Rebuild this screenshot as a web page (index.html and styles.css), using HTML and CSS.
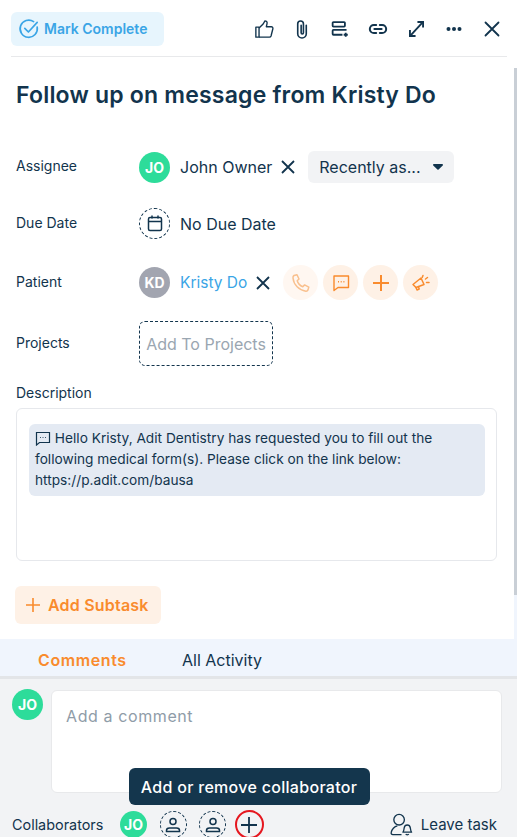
FILE: index.html
```html
<!DOCTYPE html>
<html lang="en">
<head>
    <meta charset="UTF-8">
    <meta name="viewport" content="width=device-width, initial-scale=1.0">
    <title>Task</title>
    <link rel="stylesheet" href="styles.css">
</head>
<body>
    <div class="panel">
        <div class="scroll">
            <div class="scroll-body">
                <!-- Top toolbar -->
                <div class="toolbar">
                    <div class="mark-complete">
                        <svg width="22" height="22" viewBox="0 0 22 22" fill="none" stroke="#3aa5e6" stroke-width="1.7" stroke-linecap="round" stroke-linejoin="round"><path d="M19.2 9.2A8.6 8.6 0 1 1 15.6 3.6"/><path d="M6.8 10.4l3.6 3.6 8.8-9.6"/></svg>
                        <span>Mark Complete</span>
                    </div>
                    <div class="tools">
                        <div class="tool"><svg width="21" height="20" viewBox="0 0 22 22" fill="none" stroke="#12344d" stroke-width="1.5" stroke-linejoin="round"><rect x="1.5" y="9" width="3.5" height="11"/><path d="M5 10l4.500-4.500L11.500 2c1.800 0 2.600 1.500 2.300 3L13 8.500h5.500c1.300 0 2 1 1.700 2.200l-2 8c-.3.900-1 1.300-1.800 1.300H5"/></svg></div>
                        <div class="tool"><svg width="12" height="19" viewBox="4 1.500 12 20" fill="none" stroke="#12344d" stroke-width="1.7" stroke-linecap="round"><path d="M14.500 7v9a4.500 4.500 0 0 1-9 0V5.500a3 3 0 0 1 6 0V15a1.200 1.200 0 0 1-2.400 0V7"/></svg></div>
                        <div class="tool"><svg width="18" height="18" viewBox="0 0 22 22" fill="none" stroke="#12344d" stroke-width="2.200"><rect x="2" y="2.500" width="15" height="5.500" rx="1"/><path d="M19 12H3a1 1 0 0 0-1 1v4a1 1 0 0 0 1 1h11"/><path d="M18 15.500v5M15.500 18h5"/></svg></div>
                        <div class="tool"><svg width="20" height="20" viewBox="0 0 22 22" fill="none" stroke="#12344d" stroke-width="2.200" stroke-linecap="round"><path d="M9 6.500H6.500a4.500 4.500 0 0 0 0 9H9"/><path d="M13 6.500h2.500a4.500 4.500 0 0 1 0 9H13"/><path d="M7 11h8"/></svg></div>
                        <div class="tool"><svg width="15" height="16" viewBox="2 3 16 17" fill="none" stroke="#12344d" stroke-width="2"><path d="M3.500 18.500l13-14"/><path d="M11 4h6v6"/><path d="M3 12.500v6.500h6"/></svg></div>
                        <div class="tool"><svg width="16" height="6" viewBox="0 0 16 6" fill="#12344d"><circle cx="2.500" cy="3" r="2"/><circle cx="8" cy="3" r="2"/><circle cx="13.500" cy="3" r="2"/></svg></div>
                        <div class="tool"><svg width="16" height="16" viewBox="0 0 16 16" fill="none" stroke="#12344d" stroke-width="1.800" stroke-linecap="round"><path d="M1.500 1.500l13 13M14.500 1.500l-13 13"/></svg></div>
                    </div>
                </div>

                <h1 class="title">Follow up on message from Kristy Do</h1>

                <div class="field assignee">
                    <div class="label">Assignee</div>
                    <div class="value">
                        <div class="avatar green">JO</div>
                        <span class="name">John Owner</span>
                        <svg class="x" width="16" height="16" viewBox="0 0 16 16" fill="none" stroke="#12344d" stroke-width="1.800"><path d="M2 2l12 12M14 2L2 14"/></svg>
                        <div class="select">
                            <span>Recently as...</span>
                            <svg width="10" height="6" viewBox="0 0 12 7" fill="#12344d"><path d="M1 0h10a1 1 0 0 1 .7 1.700L6.700 6.400a1 1 0 0 1-1.400 0L.3 1.700A1 1 0 0 1 1 0z"/></svg>
                        </div>
                    </div>
                </div>

                <div class="field due">
                    <div class="label">Due Date</div>
                    <div class="value">
                        <div class="avatar dashed">
                            <svg width="16" height="17" viewBox="0 0 16 17" fill="none" stroke="#12344d" stroke-width="1.500"><rect x="1.500" y="2.500" width="13" height="13" rx="1.500"/><path d="M1.500 6.500h13M5 .5v3M11 .5v3"/></svg>
                        </div>
                        <span class="name">No Due Date</span>
                    </div>
                </div>

                <div class="field patient">
                    <div class="label">Patient</div>
                    <div class="value">
                        <div class="avatar gray">KD</div>
                        <span class="name link">Kristy Do</span>
                        <svg class="x" width="16" height="16" viewBox="0 0 16 16" fill="none" stroke="#12344d" stroke-width="1.800"><path d="M2 2l12 12M14 2L2 14"/></svg>
                        <div class="actions">
                            <div class="action faded">
                                <svg width="20" height="20" viewBox="0 0 20 20" fill="none" stroke="#f9c08e" stroke-width="1.500" stroke-linejoin="round"><path d="M3 2.500l3-.8 2 4.300-1.800 1.700c.8 2.700 3 5 5.600 6l1.800-1.800 4.200 2.200-.8 2.800c-.4 1-1.200 1.400-2.200 1.300C8 17.300 2.700 11.800 2 5c-.1-1.100.2-2 1-2.500z"/></svg>
                            </div>
                            <div class="action">
                                <svg width="18" height="18" viewBox="0 0 18 18" fill="none" stroke="#f98b2d" stroke-width="1.400" stroke-linejoin="round"><path d="M2 2h14.500v11.500H6L2 16.500z"/><path d="M6 7.800h1M8.700 7.800h1M11.400 7.800h1"/></svg>
                            </div>
                            <div class="action">
                                <svg width="18" height="18" viewBox="0 0 18 18" fill="none" stroke="#f98b2d" stroke-width="2"><path d="M9 1v16M1 9h16"/></svg>
                            </div>
                            <div class="action">
                                <svg width="20" height="20" viewBox="0 0 20 20" fill="none" stroke="#f98b2d" stroke-width="1.500" stroke-linejoin="round" stroke-linecap="round"><path d="M2 11.500l8-6.500 3 6.500-8 3z"/><path d="M5 14.500l1 2.500 2.200-1-.8-2.400"/><path d="M12 2.500l-.8 2M14.500 6l2-1.500M15.500 9.500h2.500"/></svg>
                            </div>
                        </div>
                    </div>
                </div>

                <div class="field projects">
                    <div class="label">Projects</div>
                    <div class="add-project">Add To Projects</div>
                </div>

                <div class="desc-label">Description</div>
                <div class="desc-box">
                    <div class="desc-msg">
                        <svg width="16" height="15" viewBox="0 0 16 15" fill="none" stroke="#12344d" stroke-width="1.200"><path d="M1.500 1.500h13v10H4.500l-3 2.500z"/><path d="M5 6.500h.8M7.600 6.500h.8M10.200 6.500h.8"/></svg>
                        Hello Kristy, Adit Dentistry has requested you to fill out the following medical form(s). Please click on the link below: https://p.adit.com/bausa
                    </div>
                </div>

                <div class="add-subtask">
                    <svg width="14" height="14" viewBox="0 0 14 14" fill="none" stroke="#f98b2d" stroke-width="1.600"><path d="M7 0v14M0 7h14"/></svg>
                    <span>Add Subtask</span>
                </div>
            </div>

            <!-- Scrollbar -->
            <div class="track">
                <div class="track-top"></div>
                <div class="thumb"></div>
                <div class="track-rest"></div>
            </div>
        </div>

        <div class="tabs">
            <span class="tab active">Comments</span>
            <span class="tab">All Activity</span>
        </div>

        <div class="footer">
            <div class="comment-row">
                <div class="avatar green small">JO</div>
                <div class="comment-box">Add a comment</div>
            </div>
            <div class="collab-row">
                <span class="collab-label">Collaborators</span>
                <div class="avatar green tiny">JO</div>
                <div class="avatar dashed tiny">
                    <svg width="16" height="16" viewBox="0 0 16 16" fill="none" stroke="#12344d" stroke-width="1.500"><circle cx="8" cy="4.500" r="3"/><path d="M1.500 14.500v-1c0-1.500 1.500-2.500 3-2.500h7c1.500 0 3 1 3 2.500v1z"/></svg>
                </div>
                <div class="avatar dashed tiny">
                    <svg width="16" height="16" viewBox="0 0 16 16" fill="none" stroke="#12344d" stroke-width="1.500"><circle cx="8" cy="4.500" r="3"/><path d="M1.500 14.500v-1c0-1.500 1.500-2.500 3-2.500h7c1.500 0 3 1 3 2.500v1z"/></svg>
                </div>
                <div class="add-collab">
                    <svg width="18" height="18" viewBox="0 0 18 18" fill="none" stroke="#12344d" stroke-width="1.800"><path d="M9 1v16M1 9h16"/></svg>
                    <div class="tooltip">Add or remove collaborator</div>
                </div>
                <div class="leave">
                    <svg width="23" height="23" viewBox="0 0 24 24" fill="none" stroke="#12344d" stroke-width="1.400" stroke-linejoin="round"><circle cx="9.500" cy="7" r="5.500"/><path d="M12 22.500H3c-1.300 0-2-.8-1.800-2 .5-3.500 3.500-6.500 6.500-7"/><path d="M13.500 20c1-1 1-3 1.300-4.500.3-1.700 1.700-3 3.200-3s2.900 1.300 3.200 3c.3 1.500.3 3.500 1.300 4.500z"/><path d="M16.500 22c.4 1 2.600 1 3 0"/></svg>
                    <span>Leave task</span>
                </div>
            </div>
        </div>
    </div>
</body>
</html>
```

FILE: styles.css
```css
html, body {
    margin: 0;
    height: 100%;
    overflow: hidden;
}

body {
    font-family: Inter, "Open Sans", Arial, sans-serif;
    color: #12344d;
    background: #fff;
}

.panel {
    height: 837px;
    width: 517px;
    display: flex;
    flex-direction: column;
    overflow: hidden;
}

.scroll {
    flex: none;
    height: 639px;
    display: flex;
}

.scroll-body {
    flex: 1;
    padding: 0 7px 0 11px;
}

/* Scrollbar */
.track {
    width: 3px;
    display: flex;
    flex-direction: column;
}

.track-top {
    height: 68px;
}

.thumb {
    height: 527px;
    background: #c9cfd6;
}

.track-rest {
    flex: 1;
    background: #f0f5fd;
}

/* Toolbar */
.toolbar {
    height: 57px;
    box-sizing: border-box;
    display: flex;
    align-items: flex-start;
    justify-content: space-between;
    padding-top: 12px;
    border-bottom: 1px solid #e8e9eb;
}

.mark-complete {
    width: 153px;
    height: 34px;
    box-sizing: border-box;
    background: #e7f5fd;
    border-radius: 6px;
    display: flex;
    align-items: center;
    gap: 4px;
    padding: 0 0 1px 7px;
    color: #3aa5e6;
    font-size: 14px;
    font-weight: 600;
}

.tools {
    display: flex;
    align-items: center;
    height: 34px;
}

.tool {
    width: 38px;
    display: flex;
    align-items: center;
    justify-content: center;
}

.tool:last-child {
    margin-right: -4px;
}

.title {
    margin: 23px 0 0 5px;
    font-size: 23px;
    line-height: 30px;
    font-weight: 600;
    letter-spacing: 0.2px;
}

.field {
    display: flex;
    align-items: center;
    padding-left: 5px;
}

.assignee {
    margin-top: 41px;
}

.due {
    margin-top: 25px;
}

.patient {
    margin-top: 26px;
}

.projects {
    margin-top: 21px;
}

.label {
    width: 123px;
    padding-bottom: 3px;
    font-size: 14px;
    color: #12344d;
}

.value {
    display: flex;
    align-items: center;
}

.avatar {
    width: 31px;
    height: 31px;
    border-radius: 50%;
    box-sizing: border-box;
    display: flex;
    align-items: center;
    justify-content: center;
    font-size: 14px;
    font-weight: 700;
    color: #fff;
    flex: none;
}

.green {
    background: #2ddc9a;
}

.gray {
    background: #a2a5b0;
}

.dashed {
    border: 1px dashed #12344d;
}

.name {
    margin-left: 10px;
    font-size: 16px;
}

.link {
    color: #3aa5e6;
    font-size: 15.5px;
}

.x {
    margin-left: 8px;
}

.select {
    margin-left: 12px;
    width: 146px;
    height: 32px;
    box-sizing: border-box;
    background: #f2f3f5;
    border-radius: 6px;
    display: flex;
    align-items: center;
    justify-content: space-between;
    padding: 0 11px;
    font-size: 16px;
}

.actions {
    display: flex;
    gap: 5px;
    margin-left: 12px;
}

.action {
    width: 35px;
    height: 35px;
    border-radius: 50%;
    background: #fef1e6;
    display: flex;
    align-items: center;
    justify-content: center;
}

.faded {
    background: #fff7f1;
}

.add-project {
    width: 134px;
    height: 45px;
    box-sizing: border-box;
    border: 1px dashed #12344d;
    border-radius: 6px;
    display: flex;
    align-items: center;
    justify-content: center;
    font-size: 16px;
    color: #9aa6b1;
    white-space: nowrap;
}

.desc-label {
    margin: 18px 0 0 5px;
    font-size: 14px;
    line-height: 18px;
}

.desc-box {
    margin: 6px 10px 0 5px;
    height: 153px;
    box-sizing: border-box;
    border: 1px solid #e6e8ec;
    border-radius: 6px;
    padding: 15px 11px 0 12px;
}

.desc-msg {
    background: #e4eaf3;
    border-radius: 6px;
    padding: 4px 6px 5px;
    font-size: 13.7px;
    line-height: 21px;
}

.desc-msg svg {
    vertical-align: -3px;
}

.add-subtask {
    margin: 25px 0 0 4px;
    width: 146px;
    height: 38px;
    box-sizing: border-box;
    background: #fef1e6;
    border-radius: 6px;
    display: flex;
    align-items: center;
    gap: 8px;
    padding-left: 11px;
    color: #f98b2d;
    font-size: 16px;
    letter-spacing: 0.2px;
    font-weight: 600;
}

/* Tabs */
.tabs {
    flex: none;
    height: 40px;
    box-sizing: border-box;
    background: #f0f5fd;
    border-bottom: 3px solid #e3e5e8;
    display: flex;
    align-items: flex-end;
    font-size: 16px;
    padding-left: 38px;
    padding-bottom: 5px;
}

.tab {
    width: 144px;
    line-height: 22px;
}

.tab.active {
    color: #f98b2d;
    font-weight: 600;
    letter-spacing: 0.6px;
}

/* Bottom area */
.footer {
    flex: none;
    background: #f2f3f5;
    height: 158px;
    box-sizing: border-box;
    padding: 10px 15px 0 12px;
}

.comment-row {
    display: flex;
    gap: 8px;
}

.comment-box {
    flex: 1;
    height: 103px;
    margin-top: 1px;
    box-sizing: border-box;
    background: #fff;
    border: 1px solid #e8e9eb;
    border-radius: 6px;
    padding: 15px 14px;
    font-size: 16px;
    letter-spacing: 0.6px;
    color: #8f9ca8;
}

.collab-row {
    display: flex;
    align-items: center;
    margin-top: 17px;
}

.collab-label {
    font-size: 14.4px;
    width: 108px;
}

.tiny {
    width: 27px;
    height: 27px;
    margin-right: 12.5px;
}

.add-collab {
    width: 29px;
    height: 29px;
    box-sizing: border-box;
    border: 2px solid #e5171f;
    border-radius: 50%;
    display: flex;
    align-items: center;
    justify-content: center;
    margin-left: -4px;
    position: relative;
}

.tooltip {
    position: absolute;
    bottom: 32px;
    left: -108px;
    width: 241px;
    height: 37px;
    background: #14364d;
    color: #fff;
    border-radius: 6px;
    display: flex;
    align-items: center;
    justify-content: center;
    font-size: 16px;
    letter-spacing: 0.3px;
    font-weight: 500;
    white-space: nowrap;
}

.leave {
    margin-left: auto;
    margin-right: 5px;
    display: flex;
    align-items: center;
    gap: 8px;
    font-size: 15px;
}
```
